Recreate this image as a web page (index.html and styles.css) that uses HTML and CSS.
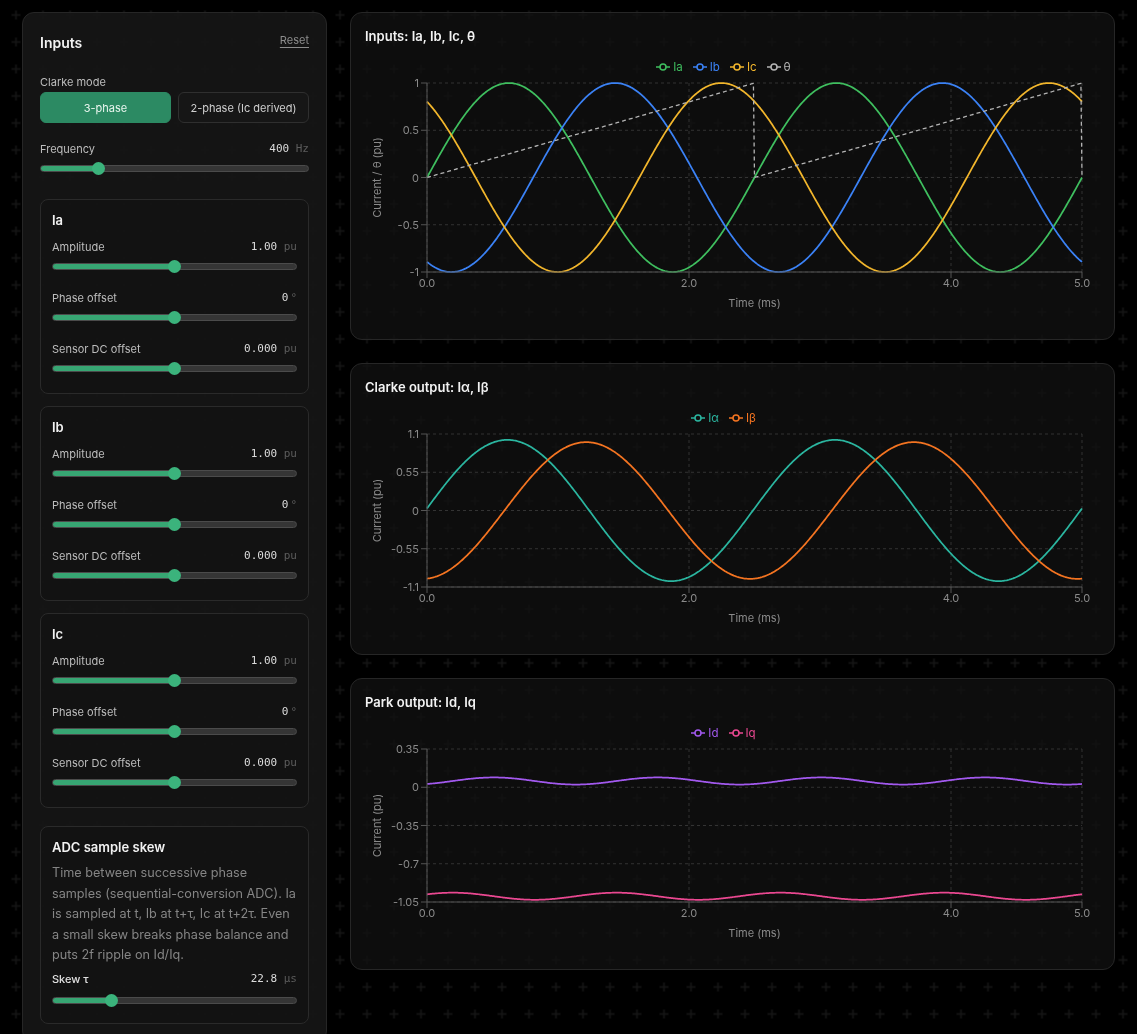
FILE: index.html
```html
<!DOCTYPE html>
<html lang="en">
<head>
  <meta charset="UTF-8" />
  <meta name="viewport" content="width=device-width, initial-scale=1.0"/>
  <title>Clarke / Park transform explorer</title>
  <link rel="stylesheet" href="styles.css">
</head>
<body>

  <!-- dotted plus backdrop -->
  <svg class="backdrop" aria-hidden="true">
    <defs>
      <pattern id="plus" width="27" height="27" x="2.5" y="1.5" patternUnits="userSpaceOnUse">
        <path d="M9 13.5h9M13.5 9v9" stroke="#161616" stroke-width="1.5" />
      </pattern>
    </defs>
    <rect width="100%" height="100%" fill="url(#plus)" />
  </svg>

  <div class="app">
    <!-- Controls -->
    <aside class="controls">
      <div class="controls-head">
        <h2>Inputs</h2>
        <button type="button" class="link-btn">Reset</button>
      </div>

      <div class="field">
        <span class="field-label">Clarke mode</span>
        <div class="seg">
          <button type="button" class="seg-btn active">3-phase</button>
          <button type="button" class="seg-btn">2-phase (Ic derived)</button>
        </div>
      </div>

      <div class="slider">
        <div class="slider-head">
          <label for="freq">Frequency</label>
          <span class="readout"><span class="num">400</span><span class="unit">Hz</span></span>
        </div>
        <input type="range" id="freq" min="0" max="2000" step="10" value="400">
      </div>

      <section class="card">
        <h3>Ia</h3>
        <div class="slider">
          <div class="slider-head">
            <label for="amp-a">Amplitude</label>
            <span class="readout"><span class="num">1.00</span><span class="unit">pu</span></span>
          </div>
          <input type="range" id="amp-a" min="0" max="2" step="0.01" value="1">
        </div>
        <div class="slider">
          <div class="slider-head">
            <label for="ph-a">Phase offset</label>
            <span class="readout"><span class="num">0</span><span class="unit deg">°</span></span>
          </div>
          <input type="range" id="ph-a" min="-180" max="180" step="1" value="0">
        </div>
        <div class="slider">
          <div class="slider-head">
            <label for="dc-a">Sensor DC offset</label>
            <span class="readout"><span class="num">0.000</span><span class="unit">pu</span></span>
          </div>
          <input type="range" id="dc-a" min="-0.2" max="0.2" step="0.001" value="0">
        </div>
      </section>

      <section class="card">
        <h3>Ib</h3>
        <div class="slider">
          <div class="slider-head">
            <label for="amp-b">Amplitude</label>
            <span class="readout"><span class="num">1.00</span><span class="unit">pu</span></span>
          </div>
          <input type="range" id="amp-b" min="0" max="2" step="0.01" value="1">
        </div>
        <div class="slider">
          <div class="slider-head">
            <label for="ph-b">Phase offset</label>
            <span class="readout"><span class="num">0</span><span class="unit deg">°</span></span>
          </div>
          <input type="range" id="ph-b" min="-180" max="180" step="1" value="0">
        </div>
        <div class="slider">
          <div class="slider-head">
            <label for="dc-b">Sensor DC offset</label>
            <span class="readout"><span class="num">0.000</span><span class="unit">pu</span></span>
          </div>
          <input type="range" id="dc-b" min="-0.2" max="0.2" step="0.001" value="0">
        </div>
      </section>

      <section class="card">
        <h3>Ic</h3>
        <div class="slider">
          <div class="slider-head">
            <label for="amp-c">Amplitude</label>
            <span class="readout"><span class="num">1.00</span><span class="unit">pu</span></span>
          </div>
          <input type="range" id="amp-c" min="0" max="2" step="0.01" value="1">
        </div>
        <div class="slider">
          <div class="slider-head">
            <label for="ph-c">Phase offset</label>
            <span class="readout"><span class="num">0</span><span class="unit deg">°</span></span>
          </div>
          <input type="range" id="ph-c" min="-180" max="180" step="1" value="0">
        </div>
        <div class="slider">
          <div class="slider-head">
            <label for="dc-c">Sensor DC offset</label>
            <span class="readout"><span class="num">0.000</span><span class="unit">pu</span></span>
          </div>
          <input type="range" id="dc-c" min="-0.2" max="0.2" step="0.001" value="0">
        </div>
      </section>

      <section class="card card-skew">
        <h3>ADC sample skew</h3>
        <p class="note">Time between successive phase samples (sequential-conversion ADC). Ia is sampled at t, Ib at t+τ, Ic at t+2τ. Even a small skew breaks phase balance and puts 2f ripple on Id/Iq.</p>
        <div class="slider">
          <div class="slider-head">
            <label for="skew" class="strong">Skew τ</label>
            <span class="readout"><span class="num">22.8</span><span class="unit">μs</span></span>
          </div>
          <input type="range" id="skew" min="0" max="100" step="0.1" value="22.8">
        </div>
      </section>
    </aside>

    <!-- Charts -->
    <main class="charts">
      <section class="panel">
        <h3 class="panel-title">Inputs: Ia, Ib, Ic, θ</h3>
        <div class="chart" id="chart-inputs"></div>
      </section>
      <section class="panel">
        <h3 class="panel-title">Clarke output: Iα, Iβ</h3>
        <div class="chart" id="chart-clarke"></div>
      </section>
      <section class="panel">
        <h3 class="panel-title">Park output: Id, Iq</h3>
        <div class="chart" id="chart-park"></div>
      </section>
    </main>
  </div>

  <script>
    const TAU = 2 * Math.PI;
    const T_END = 5;          // ms
    const X_TICKS = [0, 2, 4, 5];
    const N = 600;

    document.querySelectorAll('input[type=range]').forEach(el => {
      const p = (el.value - el.min) / (el.max - el.min);
      el.style.setProperty('--p', p);
    });

    function val(id) {
      return parseFloat(document.getElementById(id).value);
    }

    function simulate() {
      const f = val('freq');
      const skew = val('skew') * 1e-6;
      const w = TAU * f;
      const amp = [val('amp-a'), val('amp-b'), val('amp-c')];
      const ph = [val('ph-a'), val('ph-b'), val('ph-c')].map(d => d * Math.PI / 180);
      const dc = [val('dc-a'), val('dc-b'), val('dc-c')];
      const rows = [];

      for (let i = 0; i <= N; i++) {
        const tms = T_END * i / N;
        const t = tms / 1000;
        const th = w * t;
        const ia = amp[0] * Math.sin(w * t + ph[0]) + dc[0];
        const ib = amp[1] * Math.sin(w * (t + skew) - TAU / 3 + ph[1]) + dc[1];
        const ic = amp[2] * Math.sin(w * (t + 2 * skew) + TAU / 3 + ph[2]) + dc[2];

        const al = (2 / 3) * (ia - 0.5 * ib - 0.5 * ic);
        const be = (ib - ic) / Math.sqrt(3);
        const id = al * Math.cos(th) + be * Math.sin(th);
        const iq = -al * Math.sin(th) + be * Math.cos(th);

        const cyc = f * t;
        const theta = cyc - Math.floor(cyc + 1e-9);

        rows.push({ t: tms, ia, ib, ic, theta, al, be, id, iq });
      }
      return rows;
    }

    function legendIcon() {
      return '<svg width="14" height="14" viewBox="0 0 14 14"><path d="M0 7h14" stroke="currentColor" stroke-width="1.5"/>' +
        '<circle cx="7" cy="7" r="3" fill="#0e0e0e" stroke="currentColor" stroke-width="1.5"/></svg>';
    }

    function renderChart(el, cfg, rows) {
      const W = el.clientWidth;
      const H = cfg.height;
      const L = 62, R = W - 18, T = 6, B = H - 53;
      const sx = t => L + (t / T_END) * (R - L);
      const sy = v => T + (cfg.max - v) / (cfg.max - cfg.min) * (B - T);

      let svg = '';

      cfg.yTicks.forEach(v => {
        svg += `<line class="grid" x1="${L}" x2="${R}" y1="${sy(v)}" y2="${sy(v)}"/>`;
      });
      X_TICKS.forEach(t => {
        svg += `<line class="grid" x1="${sx(t)}" x2="${sx(t)}" y1="${T}" y2="${B}"/>`;
      });

      cfg.series.forEach(s => {
        const d = rows.map((r, i) => (i ? 'L' : 'M') + sx(r.t).toFixed(2) + ' ' + sy(r[s.key]).toFixed(2)).join('');
        svg += `<path class="trace ${s.cls}${s.dashed ? ' dashed' : ''}" d="${d}"/>`;
      });

      // axes
      svg += `<line class="axis" x1="${L}" x2="${L}" y1="${T}" y2="${B}"/>`;
      svg += `<line class="axis" x1="${L}" x2="${R}" y1="${B}" y2="${B}"/>`;

      cfg.yTicks.forEach(v => {
        svg += `<line class="axis" x1="${L - 6}" x2="${L}" y1="${sy(v)}" y2="${sy(v)}"/>`;
        svg += `<text class="tick" x="${L - 8}" y="${sy(v)}" text-anchor="end" dominant-baseline="central">${v}</text>`;
      });
      X_TICKS.forEach(t => {
        svg += `<line class="axis" x1="${sx(t)}" x2="${sx(t)}" y1="${B}" y2="${B + 6}"/>`;
        svg += `<text class="tick" x="${sx(t)}" y="${B + 11}" text-anchor="middle" dominant-baseline="central">${t.toFixed(1)}</text>`;
      });

      svg += `<text class="axis-label" x="${(L + R) / 2}" y="${B + 31}" text-anchor="middle" dominant-baseline="central">Time (ms)</text>`;
      svg += `<text class="axis-label" transform="translate(12 ${(T + B) / 2}) rotate(-90)" text-anchor="middle" dominant-baseline="central">${cfg.yLabel}</text>`;

      const legend = cfg.series.map(s =>
        `<span class="legend-item ${s.cls}">${legendIcon()}${s.label}</span>`).join('');

      el.innerHTML = `<div class="legend">${legend}</div>` +
        `<svg class="plot" width="${W}" height="${H}">${svg}</svg>`;
    }

    const charts = [
      {
        id: 'chart-inputs', height: 248, min: -1, max: 1,
        yTicks: [1, 0.5, 0, -0.5, -1], yLabel: 'Current / θ (pu)',
        series: [
          { key: 'ia', label: 'Ia', cls: 's-ia' },
          { key: 'ib', label: 'Ib', cls: 's-ib' },
          { key: 'ic', label: 'Ic', cls: 's-ic' },
          { key: 'theta', label: 'θ', cls: 's-theta', dashed: true }
        ]
      },
      {
        id: 'chart-clarke', height: 212, min: -1.1, max: 1.1,
        yTicks: [1.1, 0.55, 0, -0.55, -1.1], yLabel: 'Current (pu)',
        series: [
          { key: 'al', label: 'Iα', cls: 's-alpha' },
          { key: 'be', label: 'Iβ', cls: 's-beta' }
        ]
      },
      {
        id: 'chart-park', height: 212, min: -1.05, max: 0.35,
        yTicks: [0.35, 0, -0.35, -0.7, -1.05], yLabel: 'Current (pu)',
        series: [
          { key: 'id', label: 'Id', cls: 's-d' },
          { key: 'iq', label: 'Iq', cls: 's-q' }
        ]
      }
    ];

    const rows = simulate();
    charts.forEach(c => renderChart(document.getElementById(c.id), c, rows));
  </script>

</body>
</html>
```

FILE: styles.css
```css
:root {
  --green: #37a673;
  --green-thumb: #3bb37c;
  --border: #262626;
  --muted: #8a8a8a;
}

* {
  box-sizing: border-box;
}

html,
body {
  margin: 0;
  padding: 0;
}

body {
  background: #000;
  color: #e6e6e6;
  font-family: Inter, "Noto Sans", sans-serif;
  font-size: 13px;
}

.backdrop {
  position: fixed;
  inset: 0;
  width: 100%;
  height: 100%;
  z-index: -1;
}

.app {
  display: grid;
  grid-template-columns: 305px 1fr;
  gap: 23px;
  padding: 12px 22px;
  align-items: start;
}

/* ---- controls ---- */

.controls {
  background: rgba(22, 22, 22, 0.9);
  border: 1px solid var(--border);
  border-radius: 12px;
  padding: 18px 17px;
}

.controls-head {
  display: flex;
  justify-content: space-between;
  align-items: center;
  height: 22px;
}

.controls-head h2 {
  margin: 0;
  font-size: 14px;
  font-weight: 600;
  color: #f2f2f2;
}

.link-btn {
  background: none;
  border: none;
  padding: 0;
  font: inherit;
  font-size: 11px;
  color: #8c8c8c;
  text-decoration: underline;
  text-underline-offset: 3px;
  cursor: pointer;
  margin-top: -4px;
}

.field {
  margin-top: 21px;
}

.field-label {
  display: block;
  font-size: 11px;
  line-height: 16px;
  color: #bdbdbd;
  margin-bottom: 2px;
}

.seg {
  display: grid;
  grid-template-columns: 1fr 1fr;
  gap: 7px;
}

.seg-btn {
  height: 31px;
  border-radius: 6px;
  border: 1px solid #2f2f2f;
  background: #161616;
  color: #cfcfcf;
  font-family: inherit;
  font-size: 11px;
  cursor: pointer;
}

.seg-btn.active {
  background: #2c8a63;
  border-color: #2c8a63;
  color: #eaf6ef;
}

.field + .slider {
  margin-top: 18px;
}

.slider-head {
  display: flex;
  justify-content: space-between;
  align-items: center;
  line-height: 16px;
  margin-bottom: 4px;
}

.slider-head label {
  font-size: 11px;
  color: #bdbdbd;
}

.slider-head label.strong {
  color: #e0e0e0;
  font-weight: 500;
}

.readout {
  font-family: "DejaVu Sans Mono", "Liberation Mono", monospace;
  font-size: 11px;
}

.readout .num {
  color: #dcdcdc;
}

.readout .unit {
  color: #5c5c5c;
  margin-left: 1ch;
}

.readout .unit.deg {
  margin-left: 2px;
}

input[type=range] {
  -webkit-appearance: none;
  appearance: none;
  display: block;
  width: 100%;
  height: 14px;
  margin: 0;
  background: transparent;
}

input[type=range]::-webkit-slider-runnable-track {
  box-sizing: border-box;
  height: 7px;
  border-radius: 4px;
  border: 1px solid #4b4b4b;
  background: linear-gradient(to right,
    var(--green) calc(6px + (100% - 12px) * var(--p, 0)),
    #353535 0);
}

input[type=range]::-webkit-slider-thumb {
  -webkit-appearance: none;
  width: 13px;
  height: 13px;
  border-radius: 50%;
  border: none;
  background: var(--green-thumb);
  margin-top: -4px;
}

.card {
  margin-top: 12px;
  padding: 12px 11px 18px;
  border: 1px solid #2a2a2a;
  border-radius: 8px;
  background: rgba(14, 14, 14, 0.35);
}

.slider + .card {
  margin-top: 24px;
}

.card h3 {
  margin: 0 0 11px;
  font-size: 13px;
  line-height: 16px;
  font-weight: 600;
  color: #f2f2f2;
}

.card .slider + .slider {
  margin-top: 17px;
}

.card-skew {
  margin-top: 18px;
  padding-top: 12px;
  padding-bottom: 15px;
}

.card-skew h3 {
  margin-bottom: 8px;
}

.note {
  margin: 0 0 5px;
  font-size: 12.65px;
  line-height: 20.6px;
  color: #858585;
}

.card-skew .slider-head {
  margin-bottom: 7px;
}

/* ---- charts ---- */

.charts {
  display: flex;
  flex-direction: column;
  gap: 23px;
}

.panel {
  background: rgba(18, 18, 18, 0.74);
  border: 1px solid var(--border);
  border-radius: 12px;
  padding: 14px;
}

.panel-title {
  margin: 0 0 12px;
  font-size: 13px;
  line-height: 18px;
  font-weight: 600;
  color: #f2f2f2;
}

.legend {
  display: flex;
  justify-content: center;
  gap: 10px;
  height: 20px;
  align-items: center;
  padding-right: 18px;
  font-size: 11.5px;
}

.legend-item {
  display: inline-flex;
  align-items: center;
  gap: 3px;
}

.plot {
  display: block;
}

.grid {
  stroke: #333;
  stroke-dasharray: 3 3;
  stroke-width: 1;
}

.axis {
  stroke: #555;
  stroke-width: 1;
}

.tick,
.axis-label {
  fill: var(--muted);
  font-size: 11px;
}

.trace {
  fill: none;
  stroke: currentColor;
  stroke-width: 1.75;
  stroke-linejoin: round;
}

.trace.dashed {
  stroke-width: 1.3;
  stroke-dasharray: 4 3;
}

.s-ia { color: #3fbf5f; }
.s-ib { color: #3b82f6; }
.s-ic { color: #f2b62c; }
.s-theta { color: #b4b4b4; }
.s-alpha { color: #2bb6a0; }
.s-beta { color: #f47421; }
.s-d { color: #a259ee; }
.s-q { color: #ea4891; }
```
